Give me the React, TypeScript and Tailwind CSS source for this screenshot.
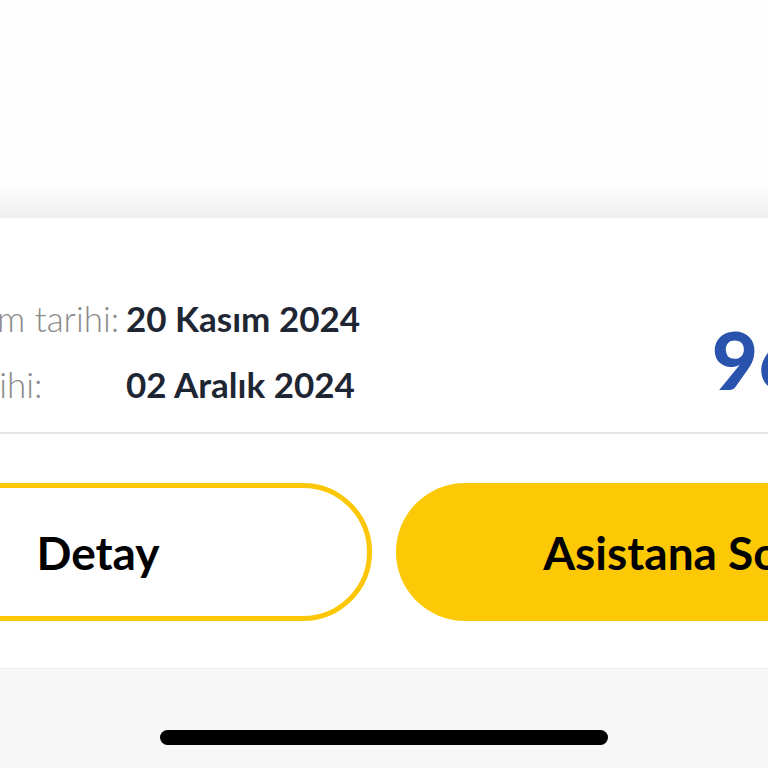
import React from "react";

const rows = [
  { label: "Fatura kesim tarihi:", value: "20 Kasım 2024" },
  { label: "Ödeme tarihi:", value: "02 Aralık 2024" },
];

export default function App() {
  return (
    <div
      className="flex h-[768px] w-[768px] flex-col overflow-hidden bg-[#f7f7f7]"
      style={{ fontFamily: "Lato, 'Noto Sans', sans-serif" }}
    >
      {/* upper screen fades into the sheet */}
      <div className="flex h-[218px] shrink-0 flex-col bg-[#fdfdfd]">
        <div className="flex-1" />
        <div className="h-[30px] bg-gradient-to-b from-[#fdfdfd] to-[#eeeeee]" />
      </div>

      <div className="flex shrink-0 flex-col bg-white">
        {/* invoice info */}
        <div className="flex h-[216px] items-start justify-between border-b-2 border-[#e6e6e6] -ml-[163px] -mr-[255px] pt-[82px]">
          <div className="flex flex-col gap-[30px]">
            {rows.map((r) => (
              <div key={r.label} className="flex items-center leading-[36px]">
                <span className="w-[289px] shrink-0 text-[35px] font-light text-[#8a8a8a]">{r.label}</span>
                <span className="text-[35px] font-bold text-[#1f2633]">{r.value}</span>
              </div>
            ))}
          </div>
          <div className="mt-[19px] whitespace-nowrap text-[80px] font-black leading-none text-[#2953ad]">
            96,45 TL
          </div>
        </div>

        {/* actions */}
        <div className="flex gap-6 -ml-[176px] pt-[49px] pb-[47px]">
          <button className="flex h-[138px] w-[548px] shrink-0 items-center justify-center rounded-full border-[5px] border-[#fbc707] bg-white text-[46px] font-bold text-black">
            Detay
          </button>
          <button className="flex h-[138px] w-[548px] shrink-0 items-center justify-center rounded-full bg-[#fdc806] text-[46px] font-bold text-black">
            Asistana Sor
          </button>
        </div>
      </div>

      {/* home indicator */}
      <div className="flex flex-1 items-start justify-center border-t border-[#efefef] pt-[61px]">
        <div className="h-[15px] w-[448px] rounded-full bg-black" />
      </div>
    </div>
  );
}
